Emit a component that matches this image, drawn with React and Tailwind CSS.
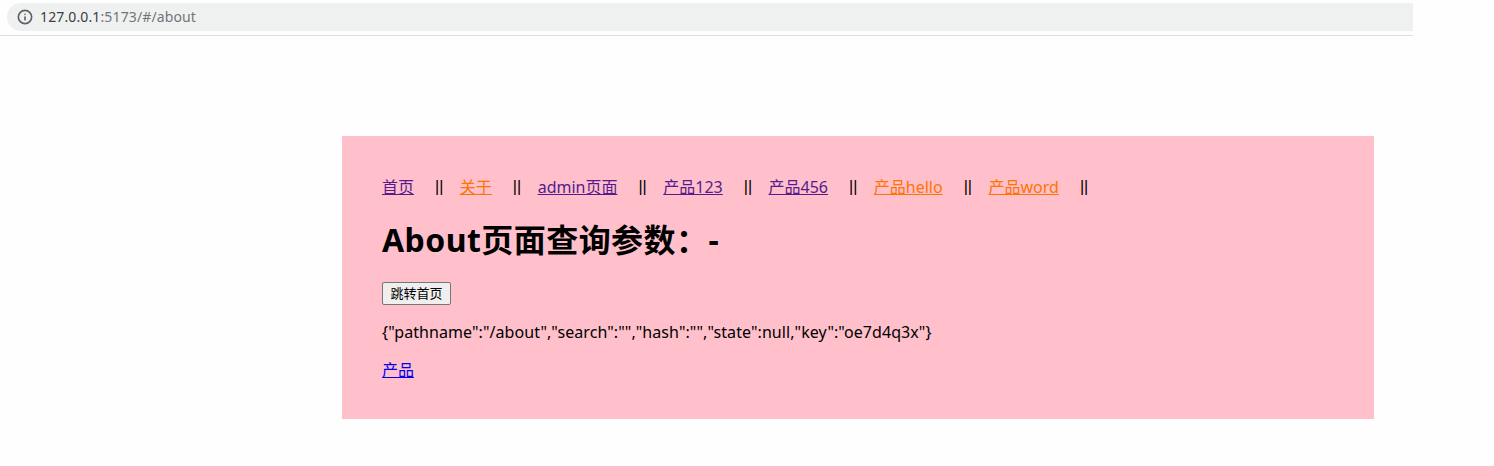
import { Info } from 'lucide-react';

const font = { fontFamily: '"Noto Sans", "Noto Sans CJK SC", sans-serif' };

const links = [
  { label: '首页', color: 'text-[#551a8b]' },
  { label: '关于', color: 'text-[#ff7300]' },
  { label: 'admin页面', color: 'text-[#551a8b]' },
  { label: '产品123', color: 'text-[#551a8b]' },
  { label: '产品456', color: 'text-[#551a8b]' },
  { label: '产品hello', color: 'text-[#ff7300]' },
  { label: '产品word', color: 'text-[#ff7300]' },
];

export default function App() {
  return (
    <div className="h-[466px] w-[1494px] overflow-hidden bg-[#fefefe] text-black" style={font}>
      {/* browser address bar */}
      <div className="h-9 w-[1413px] border-b border-[#dedede] pl-[7px] pt-[3px]">
        <div className="flex h-7 items-center rounded-l-full bg-[#eff1f1] pl-[10px]">
          <Info className="h-4 w-4 text-[#5f6368]" strokeWidth={2.5} />
          <span className="ml-[7px] text-sm tracking-[0.13px] text-[#3c4043]">
            127.0.0.1<span className="text-[#70757a]">:5173/#/about</span>
          </span>
        </div>
      </div>

      <div className="ml-[342px] mt-[100px] h-[283px] w-[1032px] bg-[#ffc0cb] px-10 pt-[39px]">
        <nav className="flex h-[24px] items-center text-base leading-6">
          {links.map((link) => (
            <div key={link.label} className="flex items-center">
              <a href="#" className={`underline ${link.color}`}>{link.label}</a>
              <span className="ml-[21px] mr-[16.5px] font-['Liberation_Sans']">||</span>
            </div>
          ))}
        </nav>

        <h1 className="mt-[17px] text-[32px] font-bold leading-[48px] tracking-[0.45px]">About页面查询参数：-</h1>

        <button className="mt-[18px] block h-[23px] w-[69px] rounded-[2px] border border-[#767676] bg-[#efefef] text-[13px] leading-none">
          跳转首页
        </button>

        <p className="mt-[15px] text-base leading-6 tracking-[0.07px]">
          {'{"pathname":"/about","search":"","hash":"","state":null,"key":"oe7d4q3x"}'}
        </p>

        <p className="mt-[14px] text-base leading-6">
          <a href="#" className="text-[#0000ee] underline">产品</a>
        </p>
      </div>
    </div>
  );
}
